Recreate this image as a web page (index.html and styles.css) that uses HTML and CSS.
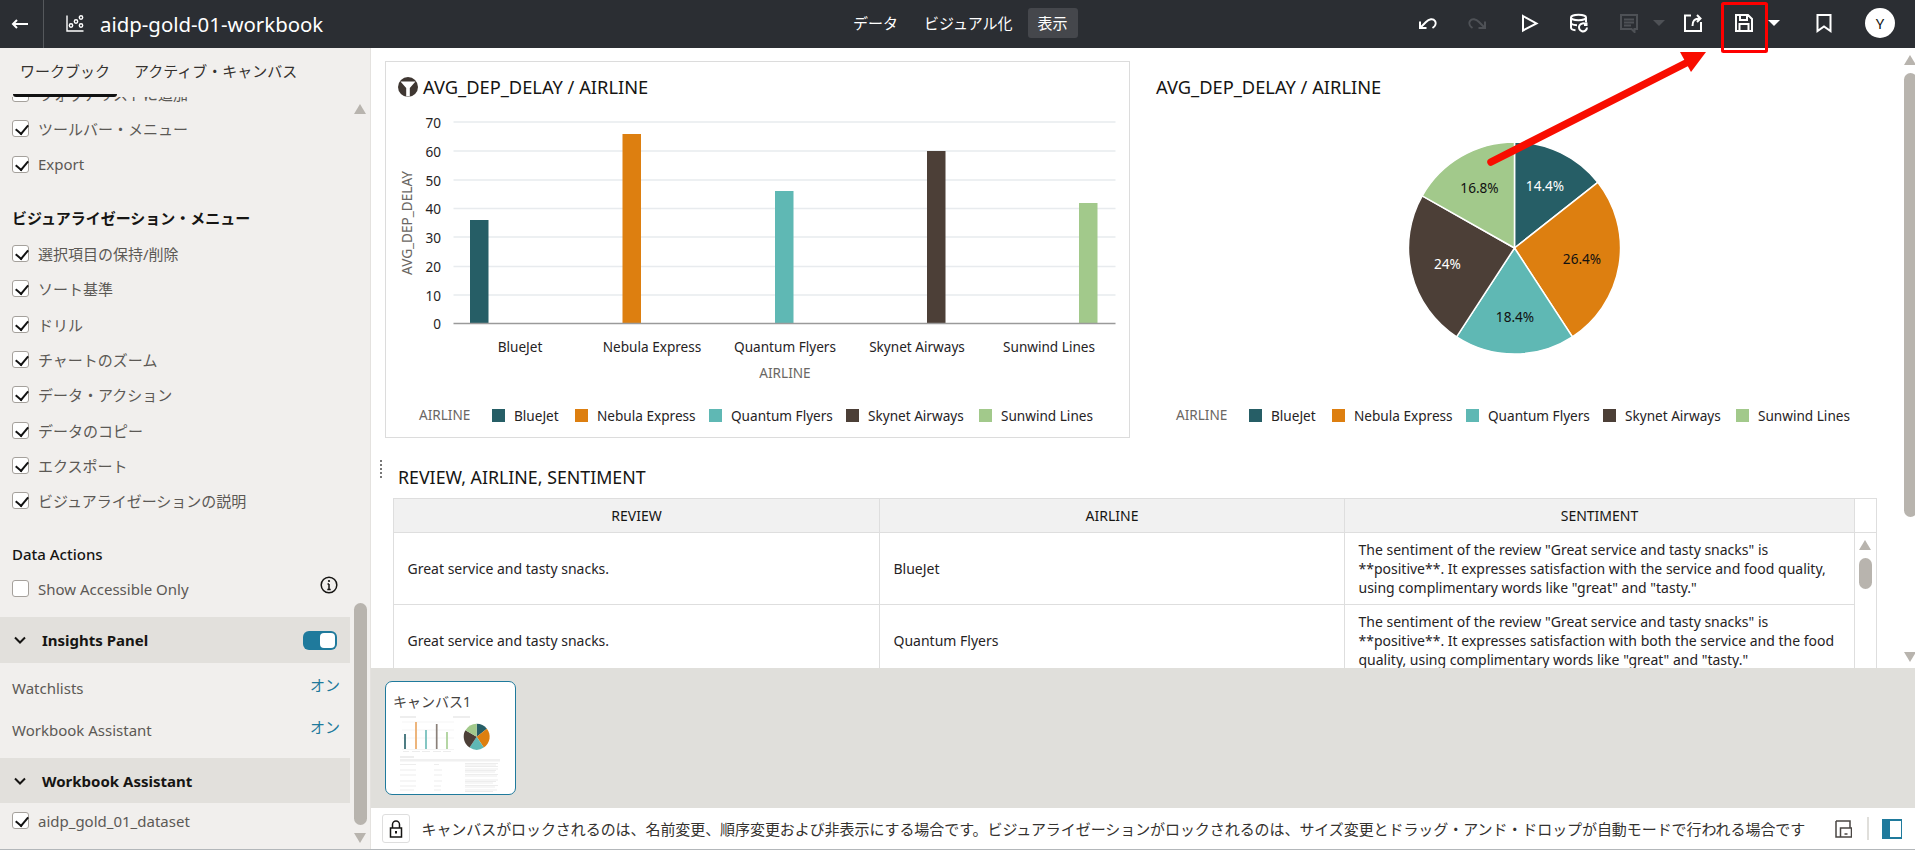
FILE: index.html
```html
<!DOCTYPE html>
<html lang="ja">
<head>
<meta charset="utf-8">
<title>aidp-gold-01-workbook</title>
<link rel="stylesheet" href="styles.css">
</head>
<body>
<div class="app">
  <header class="topbar">
    <button class="back" aria-label="戻る">
      <svg width="18" height="14" viewBox="0 0 18 14"><path d="M17 7H2M6 3 2 7l4 4" class="ic-w"/></svg>
    </button>
    <svg class="logo" width="18" height="18" viewBox="0 0 18 18"><path d="M1 .5V16h16.500" class="ic-w th"/><circle cx="5" cy="10.500" r="1.700" class="ic-w th"/><circle cx="10" cy="6.500" r="1.700" class="ic-w th"/><circle cx="15" cy="2.500" r="1.700" class="ic-w th"/><circle cx="15" cy="10.500" r="1.700" class="ic-w th"/></svg>
    <h1 class="wb-title">aidp-gold-01-workbook</h1>
    <nav class="modes">
      <a class="mode">データ</a>
      <a class="mode">ビジュアル化</a>
      <a class="mode on">表示</a>
    </nav>
    <div class="tools">
      <span class="tool t-undo"><svg width="20" height="20" viewBox="0 0 20 20"><path d="M3 8.500v6.500h6.500M3.500 14.500L9 9c3-3 7-4 9-1 1.500 2.500 0 5.500-2.500 7" class="ic-w"/></svg></span>
      <span class="tool t-redo"><svg width="20" height="20" viewBox="0 0 20 20"><path d="M17 8.500v6.500h-6.500M16.500 14.500L11 9c-3-3-7-4-9-1-1.500 2.500 0 5.500 2.500 7" class="ic-g"/></svg></span>
      <span class="tool t-play"><svg width="20" height="20" viewBox="0 0 20 20"><path d="M4 3l13.500 7.500L4 17.500z" class="ic-w"/></svg></span>
      <span class="tool t-data"><svg width="20" height="20" viewBox="0 0 20 20"><ellipse cx="9.500" cy="4.500" rx="7.500" ry="2.700" class="ic-w"/><path d="M2 4.500v10c0 1.500 2 2.500 4.500 2.700M17 4.500v5M2 9.500c0 1.400 2.500 2.500 6 2.700" class="ic-w"/><path d="M18 14.500a4 4 0 1 1-1.200-3M17.500 9.500v2.500H15" class="ic-w"/></svg></span>
      <span class="tool t-comment"><svg width="20" height="20" viewBox="0 0 20 20"><path d="M2 2h16v14h-2.500v3l-3-3H2zM5 6.500h10M5 9.500h10M5 12.500h7" class="ic-g"/></svg></span>
      <span class="caret dim"></span>
      <span class="tool t-share"><svg width="20" height="20" viewBox="0 0 20 20"><path d="M8 2.500H2v15.500h16v-9" class="ic-w"/><path d="M9.500 13c0-5 1.500-7.500 8-7.500M14 2l3.500 3.500L14 9" class="ic-w"/></svg></span>
      <span class="tool t-save"><svg width="20" height="20" viewBox="0 0 20 20"><path d="M2 2h12l4 4v12H2zM6 2v5h7V2M5.500 18v-7h9v7" class="ic-w"/></svg></span>
      <span class="caret"></span>
      <span class="tool t-mark"><svg width="20" height="20" viewBox="0 0 20 20"><path d="M3.500 2h13v16L10 13.500 3.500 18z" class="ic-w"/></svg></span>
      <span class="avatar">Y</span>
    </div>
  </header>

  <div class="work">
    <aside class="side">
      <div class="side-tabs">
        <span class="side-tab on">ワークブック</span>
        <span class="side-tab">アクティブ・キャンバス</span>
      </div>
      <div class="side-scroll">
        <div class="side-inner">
          <label class="row"><i class="cb"></i>ウォッチリストに追加</label>
          <label class="row"><i class="cb ck"></i>ツールバー・メニュー</label>
          <label class="row"><i class="cb ck"></i>Export</label>
          <h3 class="sec sec-a">ビジュアライゼーション・メニュー</h3>
          <label class="row"><i class="cb ck"></i>選択項目の保持/削除</label>
          <label class="row"><i class="cb ck"></i>ソート基準</label>
          <label class="row"><i class="cb ck"></i>ドリル</label>
          <label class="row"><i class="cb ck"></i>チャートのズーム</label>
          <label class="row"><i class="cb ck"></i>データ・アクション</label>
          <label class="row"><i class="cb ck"></i>データのコピー</label>
          <label class="row"><i class="cb ck"></i>エクスポート</label>
          <label class="row"><i class="cb ck"></i>ビジュアライゼーションの説明</label>
          <h3 class="sec sec-b">Data Actions</h3>
          <label class="row"><i class="cb"></i>Show Accessible Only
            <svg class="info" width="18" height="18" viewBox="0 0 18 18"><circle cx="9" cy="9" r="7.800" class="ic-k"/><path d="M9 8v5.500M7.300 13.500h3.400M7.500 8H9" class="ic-k"/><circle cx="9" cy="5" r="1.100" class="dot"/></svg>
          </label>
          <div class="band band-a">
            <svg class="chev" width="12" height="8" viewBox="0 0 12 8"><path d="M1 1.500l5 5 5-5" class="ic-k th2"/></svg>
            <span>Insights Panel</span>
            <span class="toggle"><i></i></span>
          </div>
          <div class="kv kv-a"><span>Watchlists</span><b>オン</b></div>
          <div class="kv"><span>Workbook Assistant</span><b>オン</b></div>
          <div class="band band-b">
            <svg class="chev" width="12" height="8" viewBox="0 0 12 8"><path d="M1 1.500l5 5 5-5" class="ic-k th2"/></svg>
            <span>Workbook Assistant</span>
          </div>
          <label class="row"><i class="cb ck"></i>aidp_gold_01_dataset</label>
        </div>
      </div>
      <div class="sb side-sb">
        <i class="up"></i><i class="thumb"></i><i class="dn"></i>
      </div>
    </aside>

    <main class="main">
      <section class="canvas">
        <div class="charts">
          <article class="card bordered">
            <div class="card-head">
              <svg class="filter" width="20" height="20" viewBox="0 0 20 20"><circle cx="10" cy="10" r="10" class="brown"/><path d="M2.500 4.500h15L11.800 11v8.500H8.200V11z" class="wh"/></svg>
              <h2>AVG_DEP_DELAY / AIRLINE</h2>
            </div>
            <svg class="plot" viewBox="386 103 743 287" width="743" height="287">
              <g class="grid">
                <path d="M453.500 123H1115.500M453.500 152H1115.500M453.500 181H1115.500M453.500 209.500H1115.500M453.500 238H1115.500M453.500 267.500H1115.500M453.500 296H1115.500"/>
              </g>
              <rect x="470" y="221" width="18.500" height="103" fill="#265e66"/>
              <rect x="622.500" y="135" width="18.500" height="189" fill="#dd7f10"/>
              <rect x="775" y="192" width="18.500" height="132" fill="#5fb8b4"/>
              <rect x="927" y="152" width="18.500" height="172" fill="#4c3f37"/>
              <rect x="1079" y="204" width="18.500" height="120" fill="#a2c98b"/>
              <path d="M453.500 324.500H1115.500" class="axis"/>
              <g class="ylab">
                <text x="441" y="123">70</text><text x="441" y="152">60</text><text x="441" y="181">50</text><text x="441" y="209">40</text><text x="441" y="238">30</text><text x="441" y="267">20</text><text x="441" y="296">10</text><text x="441" y="324">0</text>
              </g>
              <g class="xlab">
                <text x="520" y="347">BlueJet</text><text x="652" y="347">Nebula Express</text><text x="785" y="347">Quantum Flyers</text><text x="917" y="347">Skynet Airways</text><text x="1049" y="347">Sunwind Lines</text>
              </g>
              <text x="785" y="373" class="axt mid">AIRLINE</text>
              <text x="406" y="224" class="axt mid" transform="rotate(-90 406 224)">AVG_DEP_DELAY</text>
            </svg>
            <div class="legend">
              <span class="lg-name">AIRLINE</span>
              <span class="lg"><i class="c1"></i>BlueJet</span>
              <span class="lg"><i class="c2"></i>Nebula Express</span>
              <span class="lg"><i class="c3"></i>Quantum Flyers</span>
              <span class="lg"><i class="c4"></i>Skynet Airways</span>
              <span class="lg"><i class="c5"></i>Sunwind Lines</span>
            </div>
          </article>
          <article class="card">
            <div class="card-head">
              <h2>AVG_DEP_DELAY / AIRLINE</h2>
            </div>
            <svg class="plot" viewBox="1143 102 743 287" width="743" height="287">
              <g class="slices">
                <path d="M1514.500 248V142A106 106 0 0 1 1597.800 182.400Z" fill="#265e66"/>
                <path d="M1514.500 248L1597.800 182.400A106 106 0 0 1 1572.400 336.800Z" fill="#dd7f10"/>
                <path d="M1514.500 248L1572.400 336.800A106 106 0 0 1 1456.600 336.800Z" fill="#5fb8b4"/>
                <path d="M1514.500 248L1456.600 336.800A106 106 0 0 1 1422.200 195.800Z" fill="#4c3f37"/>
                <path d="M1514.500 248L1422.200 195.800A106 106 0 0 1 1514.500 142Z" fill="#a2c98b"/>
              </g>
              <text x="1545" y="185" class="pct w">14.4%</text>
              <text x="1582" y="258" class="pct">26.4%</text>
              <text x="1515" y="316" class="pct">18.4%</text>
              <text x="1447.500" y="263" class="pct w">24%</text>
              <text x="1479.500" y="187" class="pct">16.8%</text>
            </svg>
            <div class="legend">
              <span class="lg-name">AIRLINE</span>
              <span class="lg"><i class="c1"></i>BlueJet</span>
              <span class="lg"><i class="c2"></i>Nebula Express</span>
              <span class="lg"><i class="c3"></i>Quantum Flyers</span>
              <span class="lg"><i class="c4"></i>Skynet Airways</span>
              <span class="lg"><i class="c5"></i>Sunwind Lines</span>
            </div>
          </article>
        </div>
        <div class="tbl-sec">
          <span class="handle"></span>
          <h2 class="tbl-title">REVIEW, AIRLINE, SENTIMENT</h2>
          <table class="tbl">
            <colgroup><col class="w1"><col class="w2"><col class="w3"><col class="w4"></colgroup>
            <thead>
              <tr><th>REVIEW</th><th>AIRLINE</th><th>SENTIMENT</th><th class="blank"></th></tr>
            </thead>
            <tbody>
              <tr><td>Great service and tasty snacks.</td><td>BlueJet</td><td>The sentiment of the review "Great service and tasty snacks" is **positive**. It expresses satisfaction with the service and food quality, using complimentary words like "great" and "tasty."</td><td class="blank"></td></tr>
              <tr><td>Great service and tasty snacks.</td><td>Quantum Flyers</td><td>The sentiment of the review "Great service and tasty snacks" is **positive**. It expresses satisfaction with both the service and the food quality, using complimentary words like "great" and "tasty."</td><td class="blank"></td></tr>
            </tbody>
          </table>
          <div class="sb tbl-sb"><i class="up"></i><i class="thumb"></i></div>
        </div>
        <div class="sb main-sb"><i class="up"></i><i class="thumb"></i><i class="dn"></i></div>
      </section>

      <section class="film">
        <div class="thumbc">
          <span class="thumb-t">キャンバス1</span>
          <svg class="mini" viewBox="386 711 129 83" width="129" height="83">
            <path d="M400 717h16M453 717h17" class="m-t"/>
            <path d="M402 722h52M402 730h52M402 738h52" class="m-g"/>
            <path d="M405 749v-15" class="m-b" stroke="#2f666e"/>
            <path d="M416 749v-27" class="m-b" stroke="#eaa865"/>
            <path d="M426 749v-19" class="m-b" stroke="#6fbdb9"/>
            <path d="M436.700 749v-25" class="m-b" stroke="#8a8079"/>
            <path d="M447 749v-17" class="m-b" stroke="#a8cf95"/>
            <path d="M402 749.500h52" class="m-g"/>
            <path d="M403 751.500h6M412 751.500h8M422 751.500h8M433 751.500h8M443 751.500h8" class="m-r"/>
            <g transform="translate(.7 .7)">
              <path d="M476 736V723A13 13 0 0 1 486.200 728Z" fill="#265e66"/>
              <path d="M476 736L486.200 728A13 13 0 0 1 483.100 746.900Z" fill="#dd7f10"/>
              <path d="M476 736L483.100 746.900A13 13 0 0 1 468.900 746.900Z" fill="#5fb8b4"/>
              <path d="M476 736L468.900 746.900A13 13 0 0 1 464.700 729.600Z" fill="#4c3f37"/>
              <path d="M476 736L464.700 729.600A13 13 0 0 1 476 723Z" fill="#a2c98b"/>
            </g>
            <path d="M400 757h14" class="m-t"/>
            <rect x="400" y="759" width="100" height="2.500" fill="#f0f0f0"/>
            <path d="M400 764.500h16M434 764.500h5M465 763.500h33M465 765h31M465 766.500h33M400 770h16M434 770h8M465 769h33M465 770.500h31M465 772h30M400 775h16M434 775h8M465 774.500h33M465 776h32M400 781h16M434 781h8M465 780h33M465 781.500h31M465 783h28M400 786h16M434 786h7M465 785.500h33M465 787h30M400 790h14M434 790h7M465 790h32M465 791.500h28" class="m-r"/>
          </svg>
        </div>
      </section>

      <footer class="status">
        <span class="lockb">
          <svg width="14" height="18" viewBox="0 0 14 18"><path d="M3.500 8V4.500a3.500 3.500 0 0 1 7 0V8M1.500 8h11v9h-11z" class="ic-k"/><path d="M7 11v2.500" class="ic-k th2"/></svg>
        </span>
        <p class="status-t">キャンバスがロックされるのは、名前変更、順序変更および非表示にする場合です。ビジュアライゼーションがロックされるのは、サイズ変更とドラッグ・アンド・ドロップが自動モードで行われる場合です</p>
        <svg class="devi" width="17" height="18" viewBox="0 0 17 18"><path d="M1 1h14v6.500M5.500 17H1V1M5.500 8h11v9h-11zM9.500 14h3" class="ic-d"/></svg>
        <span class="vsep"></span>
        <span class="panel-i"></span>
      </footer>
    </main>
  </div>
</div>
<svg class="anno" width="1915" height="850" viewBox="0 0 1915 850">
  <rect x="1722.500" y="3.500" width="44" height="48" rx="1" class="anno-box"/>
  <path d="M1491 162L1692 60" class="anno-line"/>
  <path d="M1680 52H1706L1691 72Z" class="anno-head"/>
</svg>
</body>
</html>
```
FILE: styles.css
```css
* { box-sizing: border-box; }
html, body { margin: 0; height: 850px; overflow: hidden; }
body {
  font-family: "Noto Sans", "Noto Sans CJK JP", sans-serif;
  font-size: 14px;
  color: #161513;
  background: #fff;
}
.app { height: 850px; display: flex; flex-direction: column; border-bottom: 1px solid #b3b7ba; }

/* icons */
.ic-w { fill: none; stroke: #fff; stroke-width: 2; }
.ic-g { fill: none; stroke: #4e5156; stroke-width: 2; }
.ic-k { fill: none; stroke: #161513; stroke-width: 1.5; }
.ic-d { fill: none; stroke: #4a4643; stroke-width: 1.5; }
.th { stroke-width: 1.4; }
.th2 { stroke-width: 2; }
.dot { fill: #161513; }
.brown { fill: #3f3732; }
.wh { fill: #fff; }

/* top bar */
.topbar { height: 48px; flex: none; background: #2b2e33; color: #fff; display: flex; align-items: center; position: relative; }
.back { width: 44px; height: 48px; background: none; border: 0; border-right: 1px solid #55585c; padding: 0 3px 0 0; display: flex; align-items: center; justify-content: center; }
.logo { margin-left: 22px; margin-top: -1px; }
.wb-title { margin: 0 0 0 16px; font-size: 20.400px; font-weight: 400; line-height: 48px; }
.modes { position: absolute; left: 843px; top: 8px; display: flex; height: 30px; }
.mode { height: 30px; line-height: 30px; padding: 0 10px; font-size: 15px; margin-right: 6px; border-radius: 3px; white-space: nowrap; }
.mode.on { background: #45474c; margin-left: -1px; }
.tools { position: absolute; left: 0; top: 0; width: 1915px; height: 46px; }
.tool { position: absolute; top: 13px; width: 20px; height: 20px; display: block; }
.tool svg { display: block; }
.t-undo { left: 1417px; }
.t-redo { left: 1468px; }
.t-play { left: 1519px; }
.t-data { left: 1569px; }
.t-comment { left: 1619px; }
.t-share { left: 1683px; }
.t-save { left: 1733.500px; }
.t-mark { left: 1814px; }
.caret { position: absolute; top: 20px; left: 1768px; border: 6.500px solid transparent; border-top: 6.500px solid #fff; border-bottom: 0; }
.caret.dim { left: 1653px; border-top-color: #4e5156; }
.avatar { position: absolute; left: 1865px; top: 8px; width: 30px; height: 30px; border-radius: 50%; background: #fff; color: #161513; font-size: 15px; line-height: 30px; text-align: center; }

.work { flex: 1; display: flex; min-height: 0; }

/* sidebar */
.side { width: 371px; flex: none; background: #f1efed; border-right: 1px solid #e4e2df; display: flex; flex-direction: column; position: relative; }
.side-tabs { height: 49px; flex: none; display: flex; padding-left: 13px; position: relative; z-index: 2; background: #f1efed; }
.side-tab { height: 49px; line-height: 47px; font-size: 15px; color: #35322f; padding: 0 7px; white-space: nowrap; }
.side-tab.on { width: 104px; border-bottom: 3px solid #111; border-radius: 0 0 3px 3px; margin-right: 10px; }
.side-tab:not(.on) { padding: 0 0 0 7px; }
.side-scroll { flex: 1; overflow: hidden; }
.side-inner { margin-top: -21px; }
.row { height: 35.300px; display: flex; align-items: center; padding-left: 12px; font-size: 15px; color: #5c5955; position: relative; white-space: nowrap; }
.cb { width: 17px; height: 17px; flex: none; margin-right: 9px; border: 1px solid #a5a19c; border-radius: 3px; background: #fff; position: relative; }
.cb.ck::after { content: ""; position: absolute; left: 5px; top: 1px; width: 6px; height: 10px; border: solid #111; border-width: 0 2.500px 2.500px 0; transform: rotate(40deg); }
.info { position: absolute; left: 320px; top: 5px; }
.sec { margin: 0; height: 36px; line-height: 36px; padding-left: 12px; font-size: 15px; font-weight: 700; color: #161513; white-space: nowrap; }
.sec-a { margin-top: 18px; }
.sec-b { margin-top: 18px; height: 35px; font-weight: 500; }
.band { width: 350px; background: #e2e0dc; display: flex; align-items: center; font-size: 15px; font-weight: 700; position: relative; }
.band-a { height: 46px; margin-top: 10.500px; }
.band-b { height: 45px; margin-top: 7px; }
.chev { margin: 0 16px 0 14px; flex: none; }
.toggle { position: absolute; left: 303px; top: 14px; width: 34px; height: 19px; border-radius: 6px; background: #1f7a9c; }
.toggle i { position: absolute; left: 17px; top: 2px; width: 15px; height: 15px; border-radius: 4px; background: #fff; }
.kv { height: 42px; width: 350px; display: flex; align-items: center; justify-content: space-between; padding: 0 10px 0 12px; font-size: 15px; color: #5c5955; }
.kv-a { margin-top: 4px; }
.kv b { font-weight: 400; color: #1f7a9c; padding-bottom: 8px; }

/* scrollbars */
.sb { position: absolute; width: 13px; }
.sb i { display: block; position: absolute; left: 0; }
.sb .up { width: 0; height: 0; top: 0; border: 6.500px solid transparent; border-top: 0; border-bottom: 10px solid #b8b4ae; }
.sb .dn { width: 0; height: 0; bottom: 0; border: 6.500px solid transparent; border-bottom: 0; border-top: 10px solid #b8b4ae; }
.sb .thumb { width: 13px; background: #b8b4ae; border-radius: 6.500px; }
.side-sb { left: 354px; top: 56px; height: 739px; }
.side-sb .thumb { top: 499px; height: 222px; }
.main-sb { left: 1533px; top: 7px; height: 607px; }
.main-sb .thumb { top: 18px; height: 444px; }
.tbl-sb { left: 1488px; top: 82px; height: 60px; }
.tbl-sb .thumb { top: 18px; height: 31px; }

/* main */
.main { flex: 1; min-width: 0; display: flex; flex-direction: column; }
.canvas { height: 620px; flex: none; position: relative; overflow: hidden; background: #fff; }
.charts { display: flex; gap: 12px; padding: 13px 0 0 14px; }
.card { width: 745px; height: 377px; flex: none; border: 1px solid transparent; }
.bordered { border-color: #dcdcdc; }
.card-head { height: 40px; display: flex; align-items: center; padding: 10px 0 0 12px; gap: 5px; }
.card:not(.bordered) .card-head { padding-left: 13px; }
.card-head h2 { margin: 0; font-size: 18.300px; font-weight: 400; line-height: 26px; white-space: nowrap; }
.plot { display: block; }
.grid path { stroke: #e8ebee; stroke-width: 1.500; fill: none; }
.axis { stroke: #9a9a9a; stroke-width: 1.500; fill: none; }
.plot text { font-size: 13.600px; fill: #26231f; dominant-baseline: central; }
.ylab text { text-anchor: end; }
.xlab text { text-anchor: middle; }
.mid { text-anchor: middle; }
.plot .axt { fill: #6b6763; font-size: 13.600px; }
.slices path { stroke: #fff; stroke-width: 1.500; }
.plot .pct { text-anchor: middle; fill: #111; }
.plot .pct.w { fill: #fff; }
.legend { display: grid; grid-template-columns: 73px 83px 134px 137px 133px auto; padding: 4px 0 0 33px; height: 48px; align-items: center; white-space: nowrap; color: #26231f; font-size: 13.600px; }
.lg-name { color: #6b6763; margin-top: -2px; }
.lg { display: flex; align-items: center; gap: 9px; }
.lg i { width: 13px; height: 13px; flex: none; }
.c1 { background: #265e66; }
.c2 { background: #dd7f10; }
.c3 { background: #5fb8b4; }
.c4 { background: #4c3f37; }
.c5 { background: #a2c98b; }

/* table */
.tbl-sec { position: relative; margin-top: 20px; }
.handle { position: absolute; left: 9px; top: 2px; height: 18px; border-left: 2px dotted #777; }
.tbl-title { margin: 0; height: 40px; line-height: 38px; padding-left: 27px; font-size: 17.800px; font-weight: 400; white-space: nowrap; }
.tbl { margin-left: 22px; width: 1483px; table-layout: fixed; border-collapse: collapse; font-size: 14px; }
.w1 { width: 486px; }
.w2 { width: 465px; }
.w3 { width: 510px; }
.w4 { width: 22px; }
.tbl th { height: 34px; padding: 0; background: #f1f1f1; font-weight: 400; border: 1px solid #dedede; text-align: center; }
.tbl td { height: 72px; padding: 0 13.500px; line-height: 19px; border: 1px solid #dedede; color: #26231f; }
.tbl th.blank { background: #fff; }
.tbl td.blank { border: 0; border-right: 1px solid #dedede; }

/* film strip */
.film { height: 140px; flex: none; background: #e0dfdb; padding: 13px 14px; }
.thumbc { width: 131px; height: 114px; background: #fff; border: 1px solid #1f7a9c; border-radius: 7px; padding: 10px 0 0 7px; position: relative; }
.thumb-t { display: block; font-size: 14px; line-height: 20px; color: #45423f; white-space: nowrap; }
.mini { position: absolute; left: 0; top: 29px; }
.m-t { stroke: #d4d4d4; stroke-width: .8; fill: none; }
.m-g { stroke: #f0f0f0; stroke-width: .7; fill: none; }
.m-b { stroke-width: 1.700; fill: none; }
.m-r { stroke: #dadada; stroke-width: .5; fill: none; }

/* status */
.status { flex: 1; display: flex; align-items: center; background: #fff; padding-left: 11px; position: relative; }
.lockb { width: 28px; height: 29px; flex: none; border: 1px solid #dedede; border-radius: 3px; display: flex; align-items: center; justify-content: center; }
.status-t { margin: 0 0 0 11.500px; font-size: 15px; letter-spacing: -.07px; color: #35322f; white-space: nowrap; width: 1403px; flex: none; }
.devi { margin-left: 10px; flex: none; }
.vsep { width: 2px; height: 23px; background: #e0dfdb; margin-left: 15px; flex: none; }
.panel-i { width: 20px; height: 20px; border-style: solid; border-color: #1f7a9c; border-width: 2.500px 1.500px 2.500px 8px; background: #fff; margin-left: 13px; flex: none; }

/* annotation */
.anno { position: absolute; left: 0; top: 0; pointer-events: none; }
.anno-box { fill: none; stroke: #f00; stroke-width: 3; }
.anno-line { stroke: #f80d00; stroke-width: 7.500; stroke-linecap: round; fill: none; }
.anno-head { fill: #f80d00; }
```
